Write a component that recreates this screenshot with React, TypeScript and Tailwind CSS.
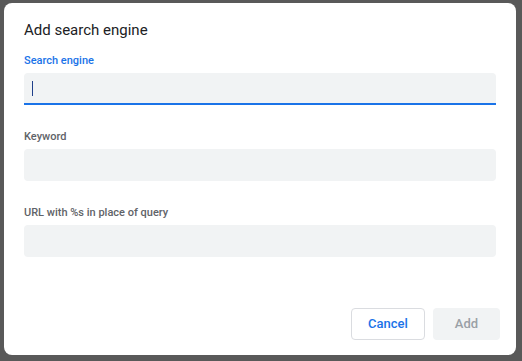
import React from 'react';

const fields = [
  { label: 'Search engine', active: true },
  { label: 'Keyword', active: false },
  { label: 'URL with %s in place of query', active: false },
];

const Field: React.FC<{ label: string; active: boolean }> = ({ label, active }) => (
  <div className="flex flex-col">
    <div
      className={`h-[12px] text-[11px] leading-[12px] font-medium ${
        active ? 'text-[#1a73e8]' : 'text-[#5f6368]'
      }`}
    >
      {label}
    </div>
    <div
      className={`mt-[6px] h-[32px] bg-[#f1f3f4] rounded-t-[4px] flex items-center pl-[8px] ${
        active ? 'border-b-2 border-[#1a73e8]' : 'rounded-b-[4px]'
      }`}
    >
      {active && <div className="w-[1px] h-[15px] bg-[#1f3f8a]" />}
    </div>
  </div>
);

export default function App() {
  return (
    <div
      className="w-[522px] h-[361px] bg-[#595959] pt-[3px] pl-[4px] overflow-hidden"
      style={{ fontFamily: 'Roboto, "Liberation Sans", sans-serif' }}
    >
      <div className="w-[512px] h-[352px] bg-white rounded-[8px] flex flex-col pt-[17px] px-[20px] pb-[15px]">
        <h2 className="text-[15px] leading-[20px] text-[#202124]">Add search engine</h2>

        <div className="mt-[15px] flex flex-col gap-[26px]">
          {fields.map((f) => (
            <Field key={f.label} label={f.label} active={f.active} />
          ))}
        </div>

        <div className="mt-auto flex justify-end gap-[8px] -mr-[4px]">
          <button className="w-[74px] h-[32px] rounded-[4px] border border-[#dadce0] bg-white text-[13px] font-medium text-[#1a73e8]">
            Cancel
          </button>
          <button className="w-[67px] h-[32px] rounded-[4px] bg-[#f1f3f4] text-[13px] font-medium text-[#9aa0a6]">
            Add
          </button>
        </div>
      </div>
    </div>
  );
}
